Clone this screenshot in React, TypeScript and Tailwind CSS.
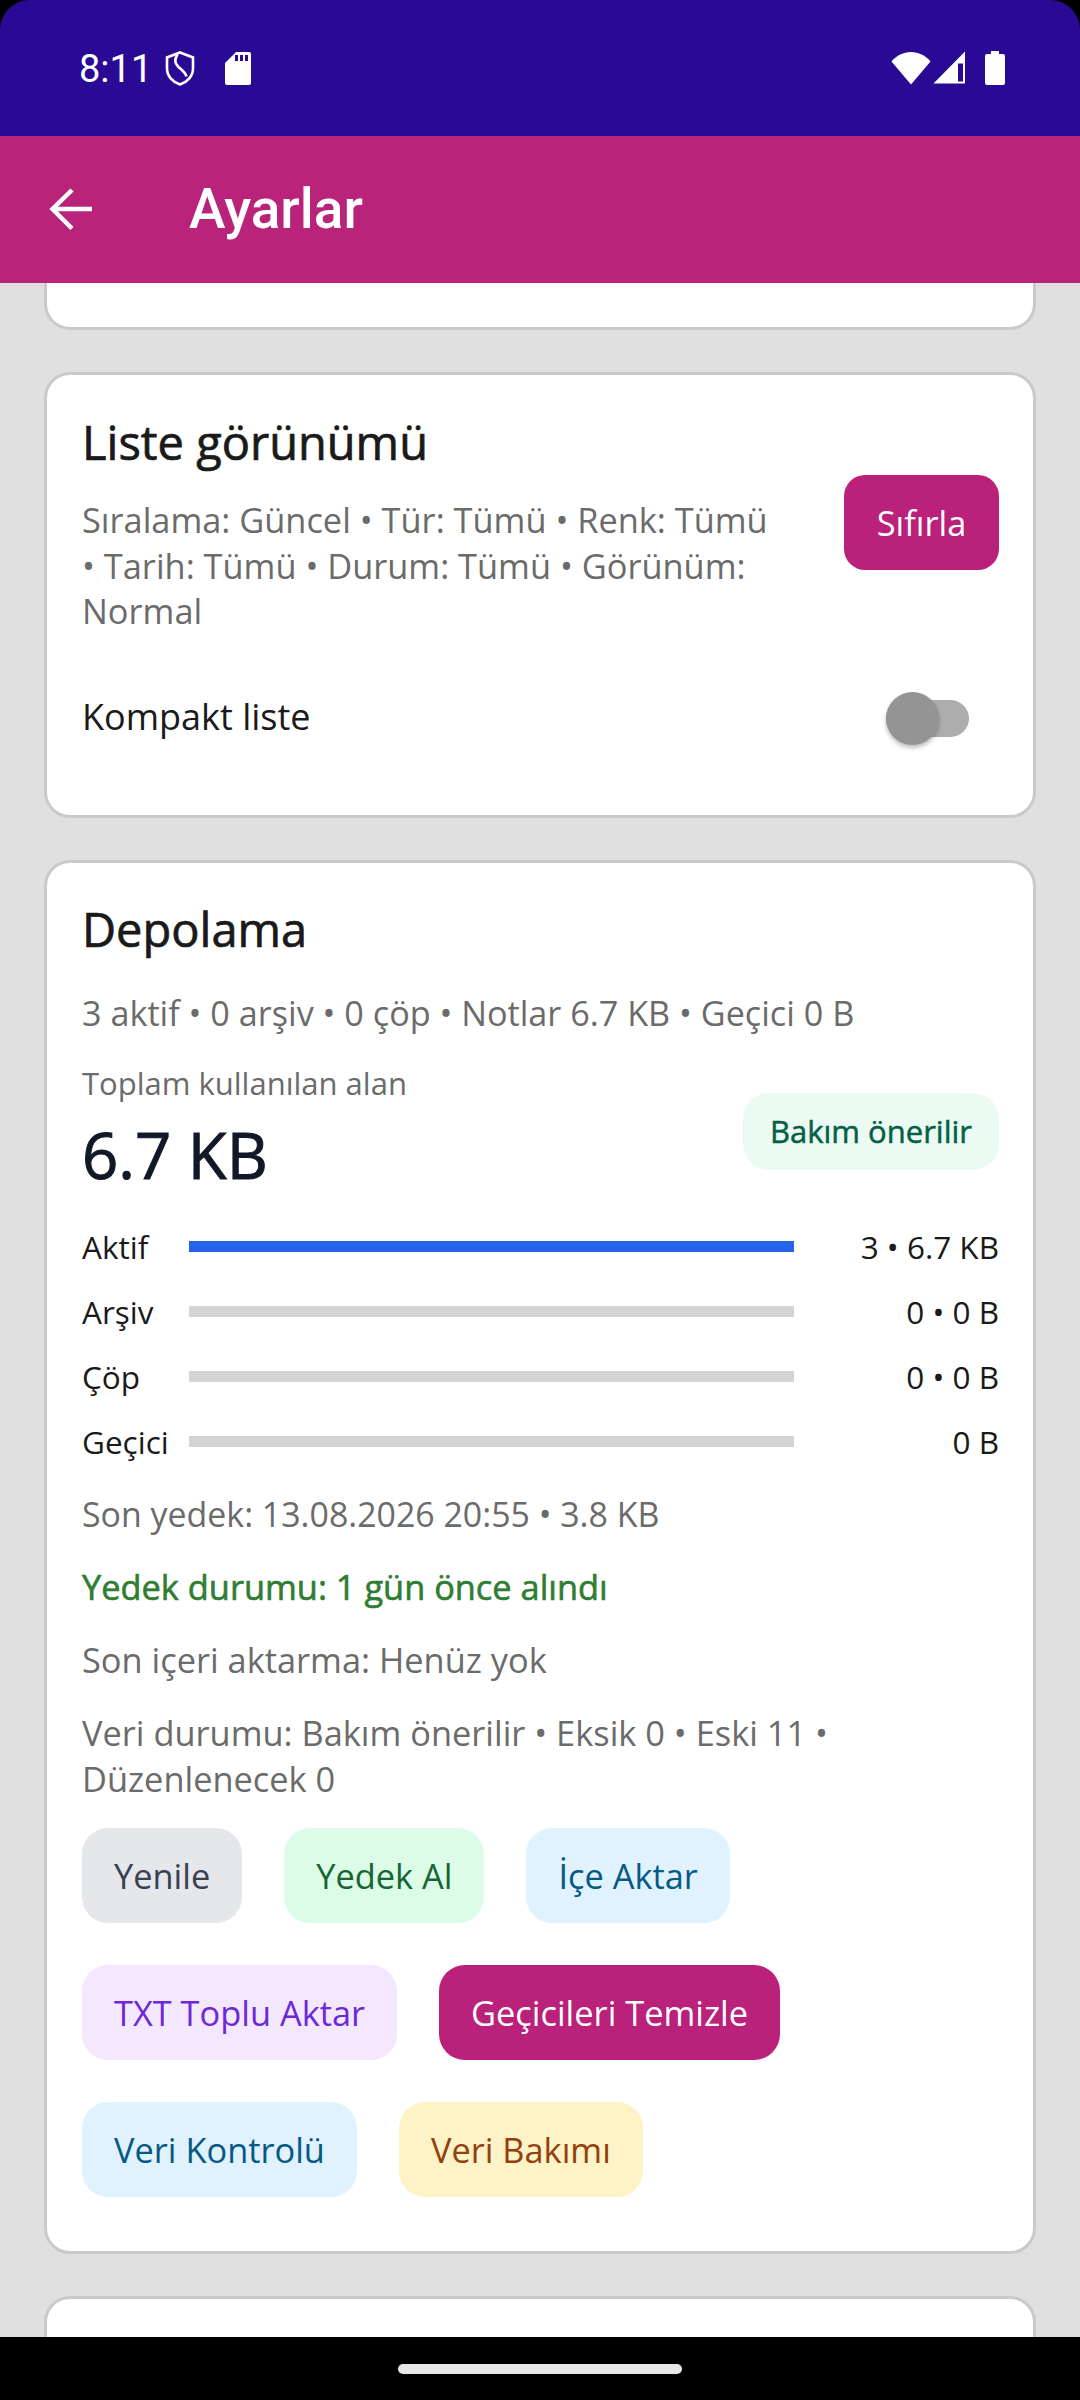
function WifiIcon() {
  return (
    <svg width="40" height="34" viewBox="0 0 40 34" fill="white">
      <path d="M0.500 10.500C5.500 4.500 12.500 1 20 1s14.500 3.500 19.500 9.500L20 33.500Z" />
    </svg>
  );
}

function SignalIcon() {
  return (
    <svg width="33" height="33" viewBox="0 0 33 33" fill="white">
      <path fillRule="evenodd" d="M32 0.500V32.500H0.500ZM30 12.500h-5v18h5Z" />
    </svg>
  );
}

function BatteryIcon() {
  return (
    <svg width="20" height="34" viewBox="0 0 20 34" fill="white">
      <path d="M6 0h8v3h4a2 2 0 0 1 2 2v27a2 2 0 0 1-2 2H2a2 2 0 0 1-2-2V5a2 2 0 0 1 2-2h4Z" />
    </svg>
  );
}

function ShieldIcon() {
  return (
    <svg width="30" height="35" viewBox="0 0 30 35" fill="none" stroke="white" strokeWidth="2.600">
      <path d="M15 1.500 28 6.500v11c0 7.500-5.500 13.500-13 16C7.500 31 2 25 2 17.500v-11Z" />
      <path d="M12.500 3.500C9.500 8 9.500 12 13 15.500c3 3 7 5 8.500 10" />
    </svg>
  );
}

function SdIcon() {
  return (
    <svg width="26" height="33" viewBox="0 0 26 33" fill="white">
      <path
        fillRule="evenodd"
        d="M11 0h13a2 2 0 0 1 2 2v29a2 2 0 0 1-2 2H2a2 2 0 0 1-2-2V11ZM10 3v6h3V3Zm5 0v6h3V3Zm5 0v6h3V3Z"
      />
    </svg>
  );
}

const rows = [
  { label: "Aktif", value: "3 • 6.7 KB", bar: "bg-[#2563eb]" },
  { label: "Arşiv", value: "0 • 0 B", bar: "bg-[#d4d4d4]" },
  { label: "Çöp", value: "0 • 0 B", bar: "bg-[#d4d4d4]" },
  { label: "Geçici", value: "0 B", bar: "bg-[#d4d4d4]" },
];

const actions = [
  { label: "Yenile", color: "bg-[#e5e7eb] text-[#374151]" },
  { label: "Yedek Al", color: "bg-[#dcfce7] text-[#166534]" },
  { label: "İçe Aktar", color: "bg-[#e0f2fe] text-[#075985]" },
  { label: "TXT Toplu Aktar", color: "bg-[#f3e8ff] text-[#6d28d9]" },
  { label: "Geçicileri Temizle", color: "bg-[#b9217a] text-white" },
  { label: "Veri Kontrolü", color: "bg-[#e0f2fe] text-[#075985]" },
  { label: "Veri Bakımı", color: "bg-[#fef3c7] text-[#92400e]" },
];

export default function App() {
  return (
    <div className="flex h-[2400px] w-[1080px] flex-col overflow-hidden bg-[#e0e0e0] font-['Open_Sans',sans-serif]">
      <div className="bg-black">
        <div className="flex h-[136px] shrink-0 items-start justify-between rounded-t-[30px] bg-[#2a0a94] pl-[79px] pr-[75px] pt-[51px]">
          <div className="flex items-center">
            <span className="font-['Roboto',sans-serif] text-[38px] leading-[34px] text-white">8:11</span>
            <span className="ml-[13px] flex">
              <ShieldIcon />
            </span>
            <span className="ml-[30px] flex">
              <SdIcon />
            </span>
          </div>
          <div className="flex items-start">
            <WifiIcon />
            <span className="ml-[2px] flex">
              <SignalIcon />
            </span>
            <span className="ml-[19px] flex">
              <BatteryIcon />
            </span>
          </div>
        </div>
      </div>

      <header className="flex h-[147px] shrink-0 items-center bg-[#b9237a] pl-[49px]">
        <svg width="44" height="44" viewBox="0 0 44 44" fill="none" stroke="white" strokeWidth="4.500">
          <path d="M43 21H4M23 2 3.500 21l19.500 19.500" />
        </svg>
        <h1 className="ml-[96px] font-['Roboto',sans-serif] text-[55px] font-medium text-white">Ayarlar</h1>
      </header>

      <main className="flex min-h-0 flex-1 flex-col gap-[42px] overflow-hidden px-[44px]">
        <div className="h-[47px] shrink-0 rounded-b-[26px] border-[3px] border-t-0 border-[#cacaca] bg-white" />

        <section className="flex h-[446px] shrink-0 flex-col rounded-[26px] border-[3px] border-[#cacaca] bg-white pl-[35px] pr-[34px] pt-[37px]">
          <div className="flex items-center justify-between">
            <div className="w-[700px]">
              <h2 className="text-[47px] leading-[60px] text-[#1a1a1a] [-webkit-text-stroke:0.7px_currentColor]">Liste görünümü</h2>
              <p className="mt-[25px] text-[34.375px] leading-[45.500px] text-[#6b6b6b]">
                Sıralama: Güncel • Tür: Tümü • Renk: Tümü • Tarih: Tümü • Durum: Tümü • Görünüm: Normal
              </p>
            </div>
            <button className="h-[95px] w-[155px] rounded-[21px] bg-[#b9217a] text-[34.375px] text-white">Sıfırla</button>
          </div>
          <div className="mt-[53px] flex items-center justify-between">
            <span className="text-[36px] leading-[60px] text-[#1a1a1a]">Kompakt liste</span>
            <div className="relative mr-[30px] mt-[3px] h-[37px] w-[83px] rounded-full bg-[#adadad]">
              <div className="absolute left-0 top-[-8px] h-[53px] w-[53px] rounded-full bg-[#949494] shadow-[0_3px_4px_rgba(0,0,0,0.25)]" />
            </div>
          </div>
        </section>

        <section className="flex h-[1394px] shrink-0 flex-col rounded-[26px] border-[3px] border-[#cacaca] bg-white pl-[35px] pr-[34px] pt-[36px]">
          <h2 className="text-[47px] leading-[60px] text-[#1a1a1a] [-webkit-text-stroke:0.7px_currentColor]">Depolama</h2>
          <p className="mt-[31px] text-[34.200px] leading-[46px] text-[#6b6b6b]">
            3 aktif • 0 arşiv • 0 çöp • Notlar 6.7 KB • Geçici 0 B
          </p>
          <div className="mt-[25px] flex items-center justify-between">
            <div>
              <p className="text-[31px] leading-[44px] text-[#6b6b6b]">Toplam kullanılan alan</p>
              <p className="mt-[7px] text-[63.500px] leading-[86px] text-[#111827] [-webkit-text-stroke:1px_currentColor]">6.7 KB</p>
            </div>
            <span className="mt-[3px] flex h-[77px] items-center rounded-[26px] bg-[#ebfbf3] px-[27px] text-[31px] text-[#065f46] [-webkit-text-stroke:0.5px_currentColor]">
              Bakım önerilir
            </span>
          </div>
          <div className="mt-[16px] flex flex-col">
            {rows.map((row) => (
              <div key={row.label} className="flex h-[65px] items-center">
                <span className="w-[107px] shrink-0 text-[31.500px] text-[#1a1a1a]">{row.label}</span>
                <div className={`h-[11px] w-[605px] shrink-0 ${row.bar}`} />
                <span className="flex-1 text-right text-[31.500px] text-[#1a1a1a]">{row.value}</span>
              </div>
            ))}
          </div>
          <p className="mt-[17px] text-[33.900px] leading-[46px] text-[#6b6b6b]">Son yedek: 13.08.2026 20:55 • 3.8 KB</p>
          <p className="mt-[27px] text-[34.375px] leading-[46px] text-[#2e7d32] [-webkit-text-stroke:0.6px_currentColor]">Yedek durumu: 1 gün önce alındı</p>
          <p className="mt-[27px] text-[34.375px] leading-[46px] text-[#6b6b6b]">Son içeri aktarma: Henüz yok</p>
          <p className="mt-[27px] text-[34.375px] leading-[46px] text-[#6b6b6b]">
            Veri durumu: Bakım önerilir • Eksik 0 • Eski 11 • Düzenlenecek 0
          </p>
          <div className="mt-[26px] flex w-[760px] flex-wrap gap-[42px]">
            {actions.map((action) => (
              <button key={action.label} className={`h-[95px] rounded-[26px] px-[32px] text-[34.375px] ${action.color}`}>
                {action.label}
              </button>
            ))}
          </div>
        </section>

        <div className="h-[200px] shrink-0 rounded-t-[26px] border-[3px] border-[#cacaca] bg-white" />
      </main>

      <div className="flex h-[63px] shrink-0 items-start justify-center bg-black pt-[27px]">
        <div className="h-[10px] w-[284px] rounded-full bg-[#e8e8e8]" />
      </div>
    </div>
  );
}
